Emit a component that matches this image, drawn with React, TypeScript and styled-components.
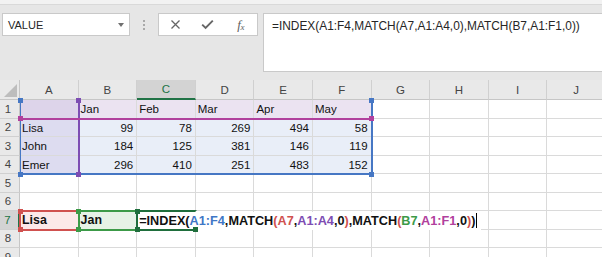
import React from 'react';
import styled, { createGlobalStyle } from 'styled-components';

const GlobalStyle = createGlobalStyle`
  html, body {
    margin: 0;
    padding: 0;
    background: #e6e6e6;
    overflow: hidden;
  }
  body {
    font-family: "Liberation Sans", Arial, sans-serif;
  }
`;

const Page = styled.div`
  width: 602px;
  height: 257px;
  overflow: hidden;
  background: #e6e6e6;
  display: flex;
  flex-direction: column;
`;

const RibbonEdge = styled.div`
  height: 4px;
  flex: none;
  background: #f2f2f2;
  border-bottom: 1px solid #d9d9d9;
`;

const FormulaBar = styled.div`
  height: 75px;
  flex: none;
  box-sizing: border-box;
  display: flex;
  align-items: flex-start;
  padding: 8px 0 0 2px;
`;

const NameBox = styled.div`
  width: 128px;
  height: 23px;
  box-sizing: border-box;
  background: #fff;
  border: 1px solid #c9c9c9;
  display: flex;
  align-items: center;
  justify-content: space-between;
  padding: 0 5px 0 5px;
  font-size: 11px;
  color: #262626;
`;

const DropArrow = styled.span`
  width: 0;
  height: 0;
  border-left: 3.5px solid transparent;
  border-right: 3.5px solid transparent;
  border-top: 4px solid #707070;
`;

const Grip = styled.div`
  width: 28px;
  height: 23px;
  display: flex;
  flex-direction: column;
  align-items: center;
  justify-content: center;
  gap: 2px;
`;

const GripDot = styled.span`
  width: 2px;
  height: 2px;
  background: #a9a9a9;
`;

const ButtonBox = styled.div`
  width: 100px;
  height: 23px;
  box-sizing: border-box;
  background: #fff;
  border: 1px solid #c9c9c9;
  display: grid;
  grid-template-columns: repeat(3, 1fr);
  align-items: center;
  justify-items: center;
`;

const Fx = styled.span`
  font-family: "Liberation Serif", "Times New Roman", serif;
  font-style: italic;
  font-size: 13px;
  color: #606060;
  letter-spacing: -0.5px;
  sub {
    font-size: 9px;
    vertical-align: -1px;
  }
`;

const FormulaInput = styled.div`
  flex: 1;
  margin-left: 5px;
  height: 59px;
  box-sizing: border-box;
  background: #fff;
  border: 1px solid #c9c9c9;
  border-right: none;
  padding: 4px 8px;
  font-size: 11.9px;
  line-height: 16px;
  color: #262626;
  white-space: nowrap;
`;

const Sheet = styled.div`
  display: grid;
  grid-template-columns: 20px repeat(10, 58.6px);
  grid-template-rows: 20px repeat(9, 18.5px);
  background: #fff;
  flex: none;
`;

type At = { $r: number; $c: number };

const Corner = styled.div`
  grid-row: 1;
  grid-column: 1;
  box-sizing: border-box;
  background: #e9e9e9;
  border-right: 1px solid #c6c6c6;
  border-bottom: 1px solid #c6c6c6;
  display: flex;
  align-items: flex-end;
  justify-content: flex-end;
  padding: 0 2px 2px 0;
`;

const ColHead = styled.div<{ $c: number; $active?: boolean }>`
  grid-row: 1;
  grid-column: ${p => p.$c};
  box-sizing: border-box;
  background: ${p => (p.$active ? '#d3d3d3' : '#e9e9e9')};
  border-right: 1px solid #d0d0d0;
  border-bottom: ${p => (p.$active ? '2px solid #217346' : '1px solid #c6c6c6')};
  display: flex;
  align-items: center;
  justify-content: center;
  font-size: 11.5px;
  color: ${p => (p.$active ? '#217346' : '#444')};
`;

const RowHead = styled.div<{ $r: number; $active?: boolean }>`
  grid-row: ${p => p.$r};
  grid-column: 1;
  box-sizing: border-box;
  background: ${p => (p.$active ? '#d3d3d3' : '#e9e9e9')};
  border-bottom: 1px solid #d0d0d0;
  border-right: ${p => (p.$active ? '2px solid #217346' : '1px solid #c6c6c6')};
  display: flex;
  align-items: center;
  justify-content: center;
  padding-right: 3px;
  font-size: 11.5px;
  color: ${p => (p.$active ? '#217346' : '#444')};
`;

const Cell = styled.div<At & { $fill?: string; $num?: boolean; $bold?: boolean }>`
  grid-row: ${p => p.$r};
  grid-column: ${p => p.$c};
  box-sizing: border-box;
  background: ${p => p.$fill || '#fff'};
  border-right: 1px solid #dadada;
  border-bottom: 1px solid #dadada;
  font-size: ${p => (p.$bold ? '12.4px' : '11.5px')};
  font-weight: ${p => (p.$bold ? 700 : 400)};
  line-height: 17.5px;
  padding: 1px 3px 0 2px;
  text-align: ${p => (p.$num ? 'right' : 'left')};
  white-space: nowrap;
  overflow: hidden;
  color: #111;
`;

const EditArea = styled.div`
  grid-column: 4 / 12;
  grid-row: 8;
  position: relative;
  z-index: 1;
`;

const EditText = styled.span`
  display: inline-block;
  height: 17.5px;
  background: #fff;
  padding: 1px 4px 0 2px;
  box-sizing: border-box;
  font-size: 12.7px;
  font-weight: 700;
  line-height: 17.5px;
  color: #111;
  white-space: nowrap;
`;

const Caret = styled.span`
  display: inline-block;
  width: 1px;
  height: 15px;
  background: #000;
  vertical-align: -3px;
  margin-left: 1px;
`;

const Ref = styled.span<{ $c: string }>`
  color: ${p => p.$c};
`;

const Frame = styled.div<{
  $col: string;
  $row: string;
  $c: string;
  $sides: string;
  $thin?: string;
}>`
  grid-column: ${p => p.$col};
  grid-row: ${p => p.$row};
  margin: -1px;
  position: relative;
  z-index: 2;
  pointer-events: none;
  border-style: solid;
  border-color: transparent;
  border-width: 2px;
  ${p => (p.$sides.includes('t') ? `border-top-color: ${p.$c};` : '')}
  ${p => (p.$sides.includes('r') ? `border-right-color: ${p.$c};` : '')}
  ${p => (p.$sides.includes('b') ? `border-bottom-color: ${p.$c};` : '')}
  ${p => (p.$sides.includes('l') ? `border-left-color: ${p.$c};` : '')}
  ${p => (p.$thin?.includes('l') ? `border-left-width: 1px; margin-left: 0;` : '')}
`;

const Handle = styled.span<{ $c: string; $v: 'top' | 'bottom'; $h: 'left' | 'right' }>`
  position: absolute;
  width: 5px;
  height: 5px;
  background: ${p => p.$c};
  ${p => p.$v}: -3.5px;
  ${p => p.$h}: -3.5px;
`;

const BLUE = '#4677c4';
const PURPLE = '#7d4db3';
const MAGENTA = '#b1409d';
const RED = '#d0514f';
const GREEN = '#3c9a48';
const DARK_GREEN = '#1f6e3c';

const cols = ['A', 'B', 'C', 'D', 'E', 'F', 'G', 'H', 'I', 'J'];

const data: (string | number)[][] = [
  ['', 'Jan', 'Feb', 'Mar', 'Apr', 'May'],
  ['Lisa', 99, 78, 269, 494, 58],
  ['John', 184, 125, 381, 146, 119],
  ['Emer', 296, 410, 251, 483, 152],
  [],
  [],
  ['Lisa', 'Jan'],
  [],
  [],
];

const fillFor = (r: number, c: number) => {
  if (r === 0 && c === 0) return '#ddd4ea';
  if (r === 0 && c < 6) return '#ebe3f1';
  if (r < 4 && c === 0) return '#dddcf0';
  if (r < 4 && c < 6) return '#e9eef8';
  if (r === 6 && c === 0) return '#fce9e9';
  if (r === 6 && c === 1) return '#e6f2e6';
  return undefined;
};

type HandlePos = ['top' | 'bottom', 'left' | 'right'];

const frames: {
  col: string;
  row: string;
  c: string;
  sides: string;
  thin?: string;
  handles: HandlePos[];
}[] = [
  {
    col: '2 / 8', row: '2 / 6', c: BLUE, sides: 'lrb', thin: 'l',
    handles: [['top', 'left'], ['top', 'right'], ['bottom', 'left'], ['bottom', 'right']],
  },
  { col: '2 / 3', row: '2 / 6', c: PURPLE, sides: 'r', handles: [['top', 'right'], ['bottom', 'right']] },
  { col: '2 / 8', row: '2 / 3', c: MAGENTA, sides: 'b', handles: [['bottom', 'left'], ['bottom', 'right']] },
  {
    col: '2 / 3', row: '8', c: RED, sides: 'trbl',
    handles: [['top', 'left'], ['bottom', 'left']],
  },
  {
    col: '3 / 4', row: '8', c: GREEN, sides: 'trbl',
    handles: [['top', 'left'], ['bottom', 'left']],
  },
  {
    col: '4 / 5', row: '8', c: DARK_GREEN, sides: 'tbl',
    handles: [['top', 'left'], ['bottom', 'left'], ['bottom', 'right']],
  },
];

const CrossIcon = () => (
  <svg width="11" height="11" viewBox="0 0 11 11">
    <path d="M1.5 1.5 L9.5 9.5 M9.5 1.5 L1.5 9.5" stroke="#666" strokeWidth="1.3" fill="none" />
  </svg>
);

const CheckIcon = () => (
  <svg width="13" height="11" viewBox="0 0 13 11">
    <path d="M1.2 5.6 L4.6 9 L11.8 1.6" stroke="#666" strokeWidth="1.9" fill="none" />
  </svg>
);

const CornerTriangle = () => (
  <svg width="13" height="13" viewBox="0 0 13 13">
    <polygon points="13,0 13,13 0,13" fill="#bdbdbd" />
  </svg>
);

const App: React.FC = () => {
  return (
    <>
      <GlobalStyle />
      <Page>
        <RibbonEdge />
        <FormulaBar>
          <NameBox>
            <span>VALUE</span>
            <DropArrow />
          </NameBox>
          <Grip>
            <GripDot />
            <GripDot />
            <GripDot />
          </Grip>
          <ButtonBox>
            <CrossIcon />
            <CheckIcon />
            <Fx>
              f<sub>x</sub>
            </Fx>
          </ButtonBox>
          <FormulaInput>=INDEX(A1:F4,MATCH(A7,A1:A4,0),MATCH(B7,A1:F1,0))</FormulaInput>
        </FormulaBar>

        <Sheet>
          <Corner>
            <CornerTriangle />
          </Corner>
          {cols.map((c, i) => (
            <ColHead key={c} $c={i + 2} $active={c === 'C'}>
              {c}
            </ColHead>
          ))}
          {data.map((row, r) => (
            <React.Fragment key={r}>
              <RowHead $r={r + 2} $active={r === 6}>
                {r + 1}
              </RowHead>
              {cols.map((_, c) => {
                const v = row[c];
                return (
                  <Cell
                    key={c}
                    $r={r + 2}
                    $c={c + 2}
                    $fill={fillFor(r, c)}
                    $num={typeof v === 'number'}
                    $bold={r === 6}
                  >
                    {v}
                  </Cell>
                );
              })}
            </React.Fragment>
          ))}

          <EditArea>
            <EditText>
              =INDEX(<Ref $c="#3f77c6">A1:F4</Ref>,MATCH<Ref $c={RED}>(</Ref>
              <Ref $c={RED}>A7</Ref>,<Ref $c={PURPLE}>A1:A4</Ref>,0<Ref $c={RED}>)</Ref>,MATCH
              <Ref $c={RED}>(</Ref>
              <Ref $c={GREEN}>B7</Ref>,<Ref $c={MAGENTA}>A1:F1</Ref>,0<Ref $c={RED}>)</Ref>)
              <Caret />
            </EditText>
          </EditArea>

          {frames.map((f, i) => (
            <Frame key={i} $col={f.col} $row={f.row} $c={f.c} $sides={f.sides} $thin={f.thin}>
              {f.handles.map(([v, h]) => (
                <Handle key={v + h} $c={f.c} $v={v} $h={h} />
              ))}
            </Frame>
          ))}
        </Sheet>
      </Page>
    </>
  );
};

export default App;
